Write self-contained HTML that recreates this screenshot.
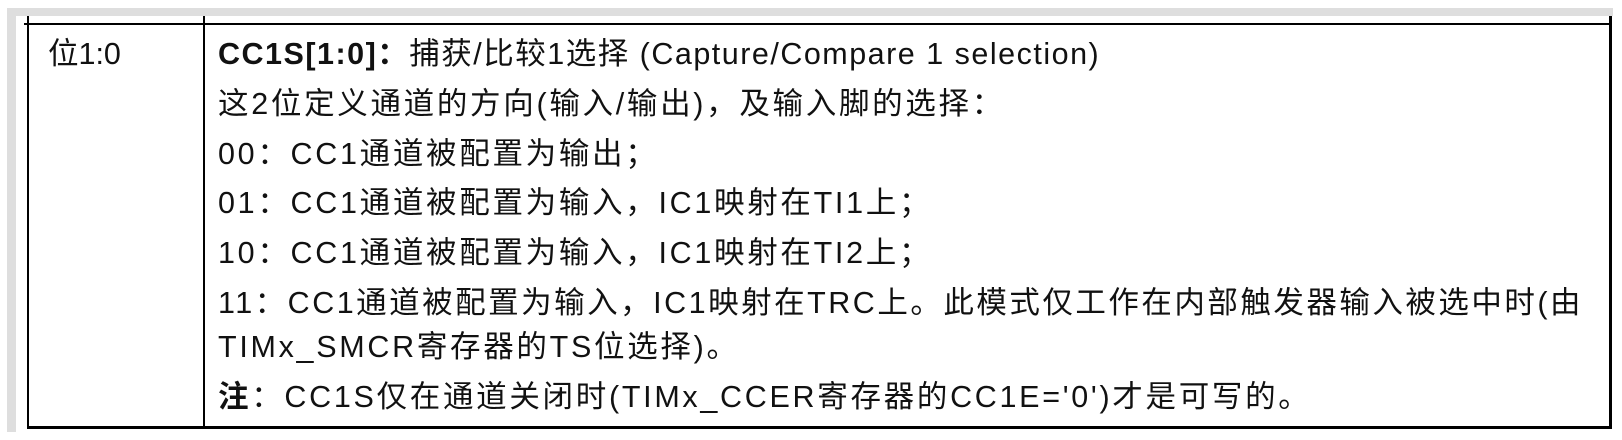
<!DOCTYPE html>
<html><head><meta charset="utf-8"><style>
html,body{margin:0;padding:0;background:#fff;width:1622px;height:440px;overflow:hidden;position:relative}
.g{position:absolute;background:#dedede}
.l{position:absolute;background:#000}
.t{position:absolute;white-space:nowrap;font-family:"Liberation Sans","Noto Sans CJK SC",sans-serif;font-size:30.5px;color:#111;line-height:32px;letter-spacing:2.7px}
b{font-weight:bold}
</style></head><body>
<div class="g" style="left:7px;top:8px;width:1606px;height:8px"></div>
<div class="g" style="left:7px;top:8px;width:9px;height:424px"></div>
<div class="l" style="left:24px;top:23px;width:1587px;height:2px"></div>
<div class="l" style="left:27px;top:16px;width:2px;height:413px"></div>
<div class="l" style="left:203px;top:16px;width:2px;height:413px"></div>
<div class="l" style="left:1609px;top:16px;width:3px;height:413px"></div>
<div class="l" style="left:27px;top:426px;width:1585px;height:3px"></div>
<div class="t" style="left:48px;top:38px;letter-spacing:0">位1:0</div>
<div class="t" style="left:218px;top:38px;letter-spacing:1.5px"><b>CC1S[1:0]：</b>捕获/比较1选择 (Capture/Compare 1 selection)</div>
<div class="t" style="left:218px;top:88px">这2位定义通道的方向(输入/输出)，及输入脚的选择：</div>
<div class="t" style="left:218px;top:138px">00：CC1通道被配置为输出；</div>
<div class="t" style="left:218px;top:187px">01：CC1通道被配置为输入，IC1映射在TI1上；</div>
<div class="t" style="left:218px;top:237px">10：CC1通道被配置为输入，IC1映射在TI2上；</div>
<div class="t" style="left:218px;top:287px;letter-spacing:2.5px">11：CC1通道被配置为输入，IC1映射在TRC上。此模式仅工作在内部触发器输入被选中时(由</div>
<div class="t" style="left:218px;top:331px">TIMx_SMCR寄存器的TS位选择)。</div>
<div class="t" style="left:218px;top:381px"><b>注</b>：CC1S仅在通道关闭时(TIMx_CCER寄存器的CC1E='0')才是可写的。</div>
</body></html>
